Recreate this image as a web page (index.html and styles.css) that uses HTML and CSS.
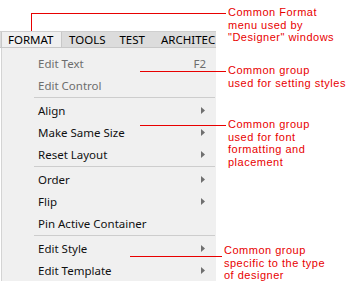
FILE: index.html
```html
<!DOCTYPE html>
<html lang="en">
<head>
  <meta charset="UTF-8">
  <meta name="viewport" content="width=device-width, initial-scale=1.0">
  <title>Format menu</title>
  <link rel="stylesheet" href="styles.css">
</head>
<body>

<div class="canvas">
  <div class="menu">
    <div class="menubar">
      <span class="tab active">FORMAT</span>
      <span class="tab">TOOLS</span>
      <span class="tab">TEST</span>
      <span class="tab last">ARCHITEC</span>
    </div>

    <ul class="dropdown">
      <li class="item disabled"><span>Edit Text</span><span class="key">F2</span></li>
      <li class="item disabled"><span>Edit Control</span></li>
      <li class="sep"></li>
      <li class="item"><span>Align</span><svg class="arrow" width="4" height="7"><polygon points="0,0 4,3.5 0,7"/></svg></li>
      <li class="item"><span>Make Same Size</span><svg class="arrow" width="4" height="7"><polygon points="0,0 4,3.5 0,7"/></svg></li>
      <li class="item"><span>Reset Layout</span><svg class="arrow" width="4" height="7"><polygon points="0,0 4,3.5 0,7"/></svg></li>
      <li class="sep"></li>
      <li class="item"><span>Order</span><svg class="arrow" width="4" height="7"><polygon points="0,0 4,3.5 0,7"/></svg></li>
      <li class="item"><span>Flip</span><svg class="arrow" width="4" height="7"><polygon points="0,0 4,3.5 0,7"/></svg></li>
      <li class="item"><span>Pin Active Container</span></li>
      <li class="sep"></li>
      <li class="item"><span>Edit Style</span><svg class="arrow" width="4" height="7"><polygon points="0,0 4,3.5 0,7"/></svg></li>
      <li class="item"><span>Edit Template</span><svg class="arrow" width="4" height="7"><polygon points="0,0 4,3.5 0,7"/></svg></li>
    </ul>
  </div>

  <!-- callouts -->
  <div class="leader leader-menu"></div>
  <p class="note note-menu">Common Format<br>menu used by<br>"Designer" windows</p>

  <div class="leader leader-styles"></div>
  <p class="note note-styles">Common group<br>used for setting styles</p>

  <div class="leader leader-font"></div>
  <p class="note note-font">Common group<br>used for font<br>formatting and<br>placement</p>

  <div class="leader leader-designer"></div>
  <p class="note note-designer">Common group<br>specific to the type<br>of designer</p>
</div>

</body>
</html>
```

FILE: styles.css
```css
* {
  box-sizing: border-box;
}

body {
  margin: 0;
  background: #fff;
  font-family: 'Noto Sans', 'Open Sans', sans-serif;
}

.canvas {
  position: relative;
  width: 350px;
  height: 289px;
  overflow: hidden;
  padding-top: 31px;
}

.menu {
  width: 216px;
}

.menubar {
  display: flex;
  height: 17px;
  background: #dcdcdc;
  border-top: 1px solid #cfcfcf;
  border-bottom: 1px solid #c8c8c8;
  overflow: hidden;
  white-space: nowrap;
  font-size: 11.5px;
  line-height: 15px;
  color: #000;
}

.tab {
  padding: 0 7px;
}

.tab.active {
  width: 61px;
  margin-left: 1px;
  padding-left: 6px;
  background: #f0f0f0;
  border-left: 1px solid #c8c8c8;
  border-right: 1px solid #c8c8c8;
  margin-bottom: -1px;
  height: 17px;
}

.tab.last {
  padding-left: 9px;
  padding-right: 0;
}

.dropdown {
  list-style: none;
  margin: 0;
  padding: 4px 0 0;
  background: #f0f0f0;
  border-left: 1px solid #d4d4d4;
  margin-left: 1px;
  font-size: 11.5px;
}

.item {
  display: flex;
  align-items: center;
  justify-content: space-between;
  height: 22px;
  padding: 0 10px 0 36px;
  color: #111;
}

.item.disabled {
  color: #6d6d6d;
}

.key {
  color: #6d6d6d;
}

.arrow {
  fill: #707070;
  margin-right: 1px;
}

.sep {
  height: 1px;
  margin: 1px 1px 1px 32px;
  background: #cdcdcd;
}

.note {
  position: absolute;
  margin: 0;
  font-family: 'Liberation Sans', Arial, sans-serif;
  font-size: 11px;
  letter-spacing: 0.5px;
  line-height: 12.7px;
  color: #e80000;
}

.leader {
  position: absolute;
  height: 1px;
  background: #e80000;
}

.leader-menu {
  left: 31px;
  top: 13px;
  width: 195px;
  height: 18px;
  background: none;
  border-top: 1px solid #e80000;
  border-left: 1px solid #e80000;
}

.note-menu {
  left: 228px;
  top: 6px;
}

.leader-styles {
  left: 140px;
  top: 71px;
  width: 86px;
}

.note-styles {
  left: 228px;
  top: 64px;
}

.leader-font {
  left: 140px;
  top: 125px;
  width: 86px;
}

.note-font {
  left: 228px;
  top: 118px;
}

.leader-designer {
  left: 130px;
  top: 256px;
  width: 92px;
}

.note-designer {
  left: 224px;
  top: 244px;
}
```
